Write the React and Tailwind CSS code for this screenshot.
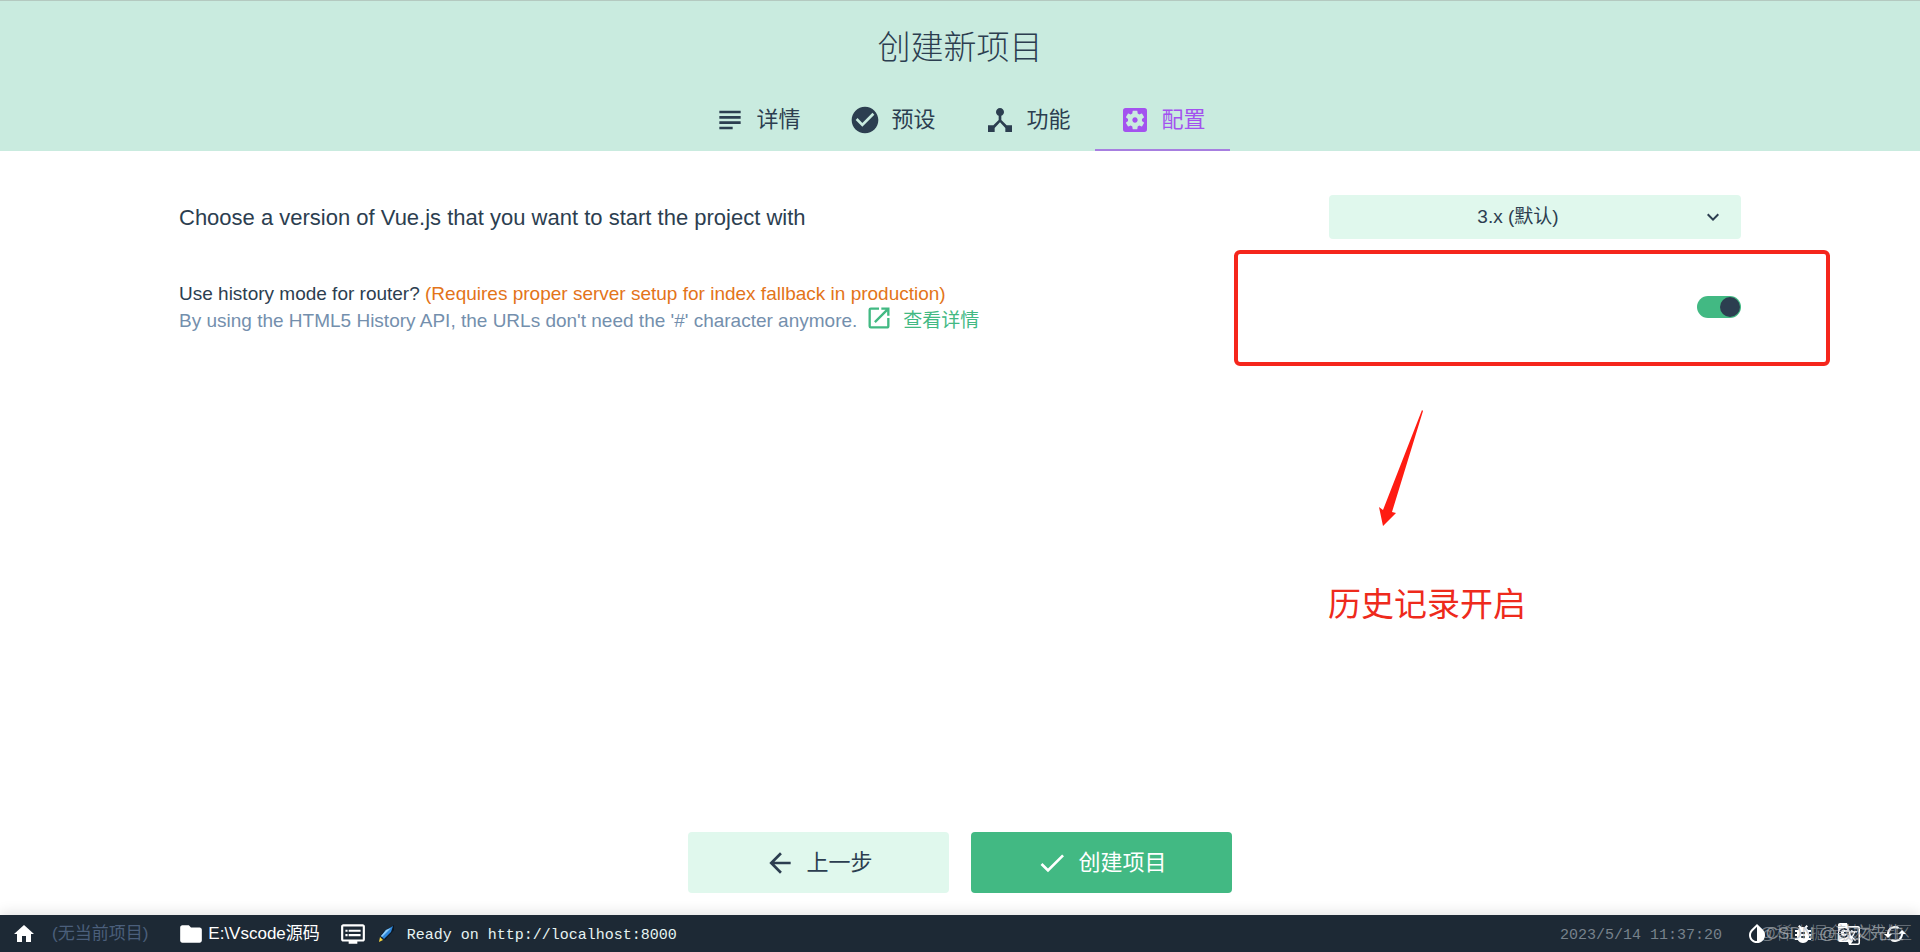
import React, { useState } from "react";
import {
  MdSubject, MdCheckCircle, MdDeviceHub, MdSettingsApplications, MdOpenInNew,
  MdKeyboardArrowDown, MdArrowBack, MdCheck, MdHome, MdFolder, MdDvr,
  MdInvertColors, MdBugReport, MdGTranslate, MdCached,
} from "react-icons/md";

const tabs = [
  { label: "详情", Icon: MdSubject },
  { label: "预设", Icon: MdCheckCircle },
  { label: "功能", Icon: MdDeviceHub },
  { label: "配置", Icon: MdSettingsApplications },
];

function Header() {
  return (
    <header className="flex flex-col items-center border-t border-[#b4c9c0] bg-[#c9ebdf]">
      <h1 className="pt-[22px] text-[33px] leading-[50px] font-light">创建新项目</h1>
      <nav className="mt-[17px] flex">
        {tabs.map(({ label, Icon }) => (
          <a
            key={label}
            href="#"
            aria-current={label === "配置" ? "page" : undefined}
            className={
              "flex h-[61px] w-[135px] items-center justify-center gap-[10px] border-b-2 text-[22px] " +
              (label === "配置" ? "border-[#a77fe0] text-[#a352ef]" : "border-transparent")
            }
          >
            <Icon className="size-8" />
            {label}
          </a>
        ))}
      </nav>
    </header>
  );
}

function Annotations() {
  return (
    <div className="pointer-events-none absolute top-[99px] left-1/2 ml-[274px] w-[596px]">
      <div className="h-[116px] rounded-md border-[4px] border-[#f5261c]" />
      <svg className="mt-11 ml-36 block" width="46" height="116" viewBox="0 0 46 116" aria-hidden="true">
        <path d="M44 0 L45 1 L14 102 L18 103 L5 116 L1 97 L5 100 Z" fill="#ff1c12" />
      </svg>
      <p className="mt-[54px] ml-[94px] text-[33px] leading-[50px] text-[#ee2a1c]">历史记录开启</p>
    </div>
  );
}

function StatusBar() {
  return (
    <footer className="relative flex h-[37px] items-center bg-[#1d2935] pt-px text-[17px] text-white shadow-[0_-2px_14px_rgba(0,0,0,0.12)]">
      <button type="button" aria-label="home" className="ml-3">
        <MdHome className="size-6" />
      </button>
      <span className="ml-4 text-[#4b5f7b]">(无当前项目)</span>
      <button type="button" className="ml-[30px] flex items-center gap-1">
        <MdFolder className="size-[26px]" />
        E:\Vscode源码
      </button>
      <button type="button" className="ml-5 flex items-center gap-3">
        <MdDvr className="size-[26px]" />
        <svg width="17" height="18" viewBox="0 0 17 18" aria-hidden="true">
          <path d="M16 0 L16 5 L7 15 L3 12 L5 7 Z" fill="#0b1622" />
          <path d="M15 1 L13 7 L6 14 L3 11 L8 5 Z" fill="#2d86d9" />
          <path d="M13 3 L4 12 L3 11 L8 5 Z" fill="#8ccbf7" />
          <path d="M2 12 L5 15 L1 17 Z" fill="#f5d63d" />
        </svg>
        <span className="pt-1 font-['Liberation_Mono',monospace] text-[15px] text-[#e6f4f2]">Ready on http://localhost:8000</span>
      </button>
      <time className="ml-auto pt-1 font-['Liberation_Mono',monospace] text-[15px] text-[#77828c]">2023/5/14 11:37:20</time>
      <div className="mr-[13px] ml-[23px] flex items-center gap-[22px]">
        <button type="button" aria-label="colors"><MdInvertColors className="size-6" /></button>
        <button type="button" aria-label="bug"><MdBugReport className="size-6" /></button>
        <button type="button" aria-label="translate"><MdGTranslate className="size-6" /></button>
        <button type="button" aria-label="refresh"><MdCached className="size-6" /></button>
      </div>
      <span className="pointer-events-none absolute right-2 font-light text-white/40">@稀土掘金技术社区</span>
      <span className="pointer-events-none absolute right-4 text-[#b0b5ba]/70">CSDN @敲文先生</span>
    </footer>
  );
}

export default function App() {
  const [history, setHistory] = useState(true);
  return (
    <div className="flex min-h-screen flex-col bg-white font-['Liberation_Sans','Noto_Sans_CJK_SC',sans-serif] text-[#2c3e50]">
      <Header />
      <main className="relative flex grow flex-col">
        <div className="mx-auto w-full max-w-[1562px] pt-[44px]">
          <div className="flex h-[44px] items-center justify-between">
            <label htmlFor="version" className="text-[22px]">
              Choose a version of Vue.js that you want to start the project with
            </label>
            <div className="relative w-[412px]">
              <select
                id="version"
                className="h-[44px] w-full appearance-none rounded bg-[#e0f8ed] pr-[34px] text-[19px] [text-align-last:center]"
              >
                <option>3.x (默认)</option>
              </select>
              <MdKeyboardArrowDown className="pointer-events-none absolute top-[10px] right-4 size-6" />
            </div>
          </div>
          <div className="mt-[41px] flex items-center justify-between">
            <div className="text-[19px] leading-[27px]">
              <label htmlFor="history">
                Use history mode for router?{" "}
                <span className="text-[#e37419]">(Requires proper server setup for index fallback in production)</span>
              </label>
              <div className="flex h-[27px] items-center text-[#748fad]">
                By using the HTML5 History API, the URLs don't need the '#' character anymore.
                <a href="#" className="ml-2 flex items-center gap-[10px] text-[#42b983]">
                  <MdOpenInNew className="mb-[6px] size-7" />
                  查看详情
                </a>
              </div>
            </div>
            <input
              id="history"
              type="checkbox"
              role="switch"
              checked={history}
              onChange={(e) => setHistory(e.target.checked)}
              className="flex h-[22px] w-[44px] appearance-none items-center rounded-full bg-[#42b983] px-px before:size-5 before:rounded-full before:bg-[#2c3e50] checked:justify-end"
            />
          </div>
        </div>
        <div className="mt-auto flex justify-center gap-[22px] pb-[22px] text-[22px]">
          <button type="button" className="flex h-[61px] w-[261px] items-center justify-center gap-[10px] rounded bg-[#e0f8ed]">
            <MdArrowBack className="size-8" />
            上一步
          </button>
          <button type="button" className="flex h-[61px] w-[261px] items-center justify-center gap-[10px] rounded bg-[#42b983] text-white">
            <MdCheck className="size-8" />
            创建项目
          </button>
        </div>
        <Annotations />
      </main>
      <StatusBar />
    </div>
  );
}
